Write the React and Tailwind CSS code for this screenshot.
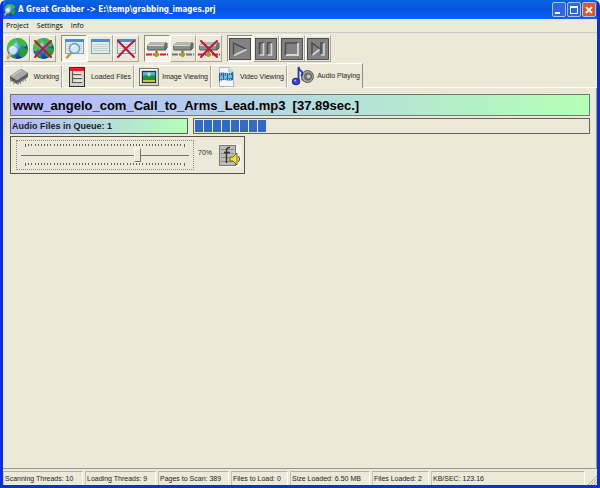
import { useId, useState } from "react";

function Cross() {
  return (
    <path d="M3 3 Q11 11 19 19 M19 3 Q11 10 3 19" fill="none" stroke="#c4123a" strokeWidth="2" strokeLinecap="round" />
  );
}

function Globe({ small, off }) {
  const id = useId();
  return (
    <svg viewBox="0 0 22 22" className={small ? "size-3" : "size-[22px]"} aria-hidden="true">
      <defs>
        <radialGradient id={id} cx="40%" cy="32%" r="70%">
          <stop offset="0" stopColor="#9bdcff" />
          <stop offset="0.45" stopColor="#2b7fe0" />
          <stop offset="1" stopColor="#0b2c86" />
        </radialGradient>
      </defs>
      <circle cx="11.500" cy="10.500" r="10.500" fill={`url(#${id})`} />
      <path d="M1 9 Q2 3 7 1 L11 2 L9 5 L7 7 L8 10 L4 13 L2 13Z" fill="#4cc442" />
      <path d="M12 0 Q19 1 21 7 L18 9 L16 7 L13 8 L11 5Z" fill="#3cbb3a" />
      <path d="M13 11 L19 10 L22 11 Q21 17 16 20 L13 17Z" fill="#2a9e35" />
      <path d="M4 14 L8 16 L10 20 Q5 19 3 16Z" fill="#2a9e35" />
      {off ? (
        <Cross />
      ) : (
        <>
          <path d="M4 16 L2 20" stroke="#d6ae6c" strokeWidth="3" strokeLinecap="round" />
          <circle cx="7" cy="12" r="4.500" fill="#d5effb" fillOpacity="0.9" stroke="#8fb0c4" />
          <path d="M4.500 11 Q5.500 9 8 9" stroke="#fff" fill="none" strokeWidth="1.500" />
        </>
      )}
    </svg>
  );
}

function ListWindow({ search, off }) {
  return (
    <svg viewBox="0 0 22 22" className="size-[22px]" aria-hidden="true">
      <rect x="2.500" y="1.500" width="18" height="14" fill="#e4ece6" stroke="#7fa2b4" />
      <rect x="2" y="1" width="19" height="3" fill="#4a8ecb" />
      <path d="M4 6.500H19 M4 8.500H19 M4 10.500H19 M4 12.500H19" stroke="#c3d0cd" />
      {search && (
        <>
          <path d="M8 15 L4 19.500" stroke="#c98d54" strokeWidth="2.500" strokeLinecap="round" />
          <circle cx="11.500" cy="10.500" r="5" fill="#c9e8f8" stroke="#7396b0" strokeWidth="1.300" />
          <path d="M8.500 10 Q9 7.500 12 7.500" stroke="#fff" fill="none" />
        </>
      )}
      {off && <Cross />}
    </svg>
  );
}

function Drive({ line, off }) {
  return (
    <svg viewBox="0 0 22 22" className="size-[22px]" aria-hidden="true">
      <path d="M5 4 H20 L21.500 5.500 V10 L19 12.500 H2 L1 11 V7.500Z" fill="#555553" />
      <path d="M5 4 H20 L18.500 7 H1.500Z" fill="#b4b4b2" />
      <path d="M1.500 7.500 H18 V11.500 H1.500Z" fill="#8d8d8b" />
      <path d="M18 7.500 L21 5 V9.500 L18 11.500Z" fill="#6f6f6d" />
      <path d="M1.500 7.500 H18" stroke="#d8d8d4" />
      <rect x="15" y="8.500" width="2" height="2" fill="#34d13d" />
      <path d="M10.500 12.500 V15" stroke="#66644c" strokeWidth="2" />
      <path d="M0 16.500 H22" stroke={line} strokeWidth="2" strokeDasharray="6 1" />
      <path d="M9 14.500 H12 L13 16.500 L11.500 19 H9.500 L8 16.500Z" fill="#b09a20" />
      {off && <Cross />}
    </svg>
  );
}

function Media({ kind }) {
  return (
    <svg viewBox="0 0 22 22" className="size-[22px]" aria-hidden="true">
      <rect x="0.5" y="0.5" width="21" height="21" fill="#828282" stroke="#4d4d4d" />
      {kind === "play" && (
        <g fill="none">
          <path d="M4.500 17 V5 L17 11" stroke="#4c4c4c" strokeWidth="1.400" />
          <path d="M17.500 11.500 L5 17.500" stroke="#d6d6d6" strokeWidth="1.800" />
        </g>
      )}
      {kind === "pause" && (
        <g fill="none">
          <path d="M4.500 17 V5 H9 M12.500 17 V5 H17" stroke="#4c4c4c" strokeWidth="1.500" />
          <path d="M4.500 17 H8.500 V5 M12.500 17 H16.500 V5" stroke="#d6d6d6" strokeWidth="1.600" />
        </g>
      )}
      {kind === "stop" && (
        <g fill="none">
          <path d="M4.500 17 V5 H17" stroke="#4c4c4c" strokeWidth="1.500" />
          <path d="M5 17 H17 V5" stroke="#d6d6d6" strokeWidth="1.800" />
        </g>
      )}
      {kind === "next" && (
        <g fill="none">
          <path d="M5 17 V5 L13 11 M14 16 V5 H17" stroke="#484848" strokeWidth="1.400" />
          <path d="M12.500 11.500 L5.500 17 M14 17 H17 V5" stroke="#d6d6d6" strokeWidth="1.600" />
        </g>
      )}
    </svg>
  );
}

function ChipIcon() {
  return (
    <svg viewBox="0 0 20 18" className="h-[18px] w-5" aria-hidden="true">
      <path d="M1 8 L12 1 L19 5 L19 9 L8 16 L1 12Z" fill="#5c5c5c" />
      <path d="M1 8 L12 1 L19 5 L8 12.500Z" fill="#a9a9a7" />
      <path d="M9 14 v3 M11.500 13 v3 M14 11 v3 M16.500 10 v3 M2 11 v3 M5 13 v3" stroke="#8a8a88" strokeWidth="1.200" />
      <path d="M3 8 L12 2.500" stroke="#d6d6d4" />
    </svg>
  );
}

function FilesIcon() {
  return (
    <svg viewBox="0 0 16 20" className="h-5 w-4" aria-hidden="true">
      <rect x="0.5" y="0.5" width="15" height="19" fill="#d3d0c5" stroke="#34302c" />
      <rect x="1" y="1" width="14" height="3" fill="#f01c1c" />
      <path d="M3.500 4 V15.500 M3 7.500 H12 M3 11.500 H13 M3 15.500 H13" stroke="#5d5850" fill="none" />
      <path d="M5 6 H12 M6 10 H13 M6 14 H13" stroke="#f4f3ee" />
    </svg>
  );
}

function ImageIcon() {
  return (
    <svg viewBox="0 0 20 18" className="h-[18px] w-5" aria-hidden="true">
      <rect x="0.5" y="0.5" width="19" height="17" fill="#d0d0c8" stroke="#77776f" />
      <path d="M1.500 16 V1.500 H18" stroke="#fff" fill="none" />
      <rect x="3.500" y="3.500" width="13" height="11" fill="#43b6f2" stroke="#333" />
      <path d="M4 12 V8 L7 7 L10 9 L13 7 L16 8 V12Z" fill="#1c8f30" />
      <path d="M4 12 H16 V14 H4Z" fill="#c8c93a" />
      <circle cx="10" cy="6" r="1.500" fill="#ffe843" />
    </svg>
  );
}

function VideoIcon() {
  return (
    <svg viewBox="0 0 16 20" className="h-5 w-4" aria-hidden="true">
      <path d="M1.500 0.500 H11 L15.500 5 V19.500 H1.500Z" fill="#f3f7fa" stroke="#a9bccb" />
      <path d="M11 0.500 V5 H15.500" fill="#d2e0ec" stroke="#a9bccb" />
      <path d="M1 6 Q4 5 8 6 T15 5 V13 Q11 14 8 13 T1 15Z" fill="#2a6290" />
      <path d="M2 8.500 L14 8 V11 L2 12.500Z" fill="#62c0ea" />
      <path d="M5.500 8 V12 M9.500 8 V12" stroke="#2a6290" />
      <path d="M2 7 H14 M2 13.500 L14 12.500" stroke="#dcebf5" strokeDasharray="1 1" />
    </svg>
  );
}

function AudioIcon() {
  return (
    <svg viewBox="0 0 22 20" className="h-5 w-[22px]" aria-hidden="true">
      <path d="M9 9 L15 5 V17 L9 14Z" fill="#b59a3a" />
      <circle cx="15.500" cy="10.500" r="6" fill="#a5a59f" stroke="#5a5a56" />
      <circle cx="16" cy="10.500" r="4" fill="#6a6a66" />
      <circle cx="16.500" cy="10.500" r="2" fill="#c4c4be" />
      <path d="M6.500 15 V1 Q7 4 10 6 Q11 8 9 10" stroke="#2a32b4" strokeWidth="1.800" fill="none" />
      <ellipse cx="4" cy="15.500" rx="3.800" ry="3.300" fill="#3a45cf" stroke="#1b1c85" />
      <circle cx="3" cy="14.500" r="1" fill="#a9b0ff" />
    </svg>
  );
}

function MixerIcon() {
  return (
    <svg viewBox="0 0 22 23" className="h-[23px] w-[22px]" aria-hidden="true">
      <rect width="22" height="23" fill="#f6f6f2" />
      <rect x="0.5" y="1.500" width="16" height="20" fill="#bcbcb8" stroke="#777" />
      <path d="M2 5.500 H15 M2 9.500 H15 M2 13.500 H15 M2 17.500 H15" stroke="#8b8b88" />
      <path d="M7.500 19 V6 Q8 3 11 3.500 M5 8.500 H11" stroke="#333" strokeWidth="1.500" fill="none" />
      <path d="M11 13 H14 L18 9 V21 L14 17 H11Z" fill="#efe02a" stroke="#6f650d" />
      <path d="M19.500 12 Q21.500 15 19.500 18" stroke="#333" fill="none" />
    </svg>
  );
}

const TOOL_GROUPS = [
  [
    ["Start grabbing", <Globe />],
    ["Stop grabbing", <Globe off />],
  ],
  [
    ["Scan pages", <ListWindow search />, true],
    ["Page list", <ListWindow />],
    ["Clear page list", <ListWindow off />],
  ],
  [
    ["Offline", <Drive line="#d3222f" />, true],
    ["Online", <Drive line="#77766a" />],
    ["Disconnect", <Drive line="#d3222f" off />],
  ],
  [
    ["Play", <Media kind="play" />, true],
    ["Pause", <Media kind="pause" />],
    ["Stop", <Media kind="stop" />],
    ["Next", <Media kind="next" />],
  ],
];

function ToolButton({ label, icon, pressed }) {
  const edge = pressed
    ? "border-t-[#8f8c7d] border-l-[#8f8c7d] border-r-white border-b-white bg-[#f5f3ea]"
    : "border-t-white border-l-white border-r-[#aaa798] border-b-[#aaa798]";
  return (
    <button type="button" aria-label={label} aria-pressed={!!pressed} className={`flex h-[27px] w-[26px] items-center justify-center border ${edge}`}>
      {icon}
    </button>
  );
}

const TABS = [
  ["Working", <ChipIcon />, "w-[58px] pl-1"],
  ["Loaded Files", <FilesIcon />, "w-[72px] pl-[6px]"],
  ["Image Viewing", <ImageIcon />, "w-[77px] pl-1"],
  ["Video Viewing", <VideoIcon />, "w-[76px] pl-[6px]"],
  ["Audio Playing", <AudioIcon />, "w-[76px] pl-1"],
];

function Tab({ label, icon, width, active }) {
  const look = active ? "h-[25px] border-r-[#8f8c7d]" : "h-[23px] border-b border-b-white border-r-[#aaa798]";
  return (
    <button
      type="button"
      role="tab"
      aria-selected={active}
      className={`flex shrink-0 items-center justify-between border-t border-r border-l border-t-white border-l-white pr-[2px] whitespace-nowrap ${width} ${look}`}
    >
      {icon}
      {label}
    </button>
  );
}

const STATUS = [
  ["Scanning Threads: 10", "w-[80px]"],
  ["Loading Threads: 9", "w-[71px]"],
  ["Pages to Scan: 389", "w-[71px]"],
  ["Files to Load: 0", "w-[57px]"],
  ["Size Loaded: 6.50 MB", "w-[80px]"],
  ["Files Loaded: 2", "w-[57px]"],
  ["KB/SEC: 123.16", "flex-1"],
];

const TICKS = Array.from({ length: 51 }, (_, i) => i);

function TickRow() {
  return (
    <div className="mx-1 flex justify-between" aria-hidden="true">
      {TICKS.map((i) => (
        <span key={i} className={`w-px bg-[#66645a] ${i === 0 || i === 50 ? "h-[3px]" : "h-[2px]"}`} />
      ))}
    </div>
  );
}

function Volume() {
  const [volume, setVolume] = useState(70);
  return (
    <section className="flex h-[38px] w-[235px] items-center border border-[#55534b] pl-[5px]">
      <div className="flex h-[30px] w-[178px] flex-col justify-between border border-dotted border-[#8c8a80] px-1 py-[3px]">
        <TickRow />
        <input
          type="range"
          aria-label="Volume"
          min="0"
          max="100"
          value={volume}
          onChange={(e) => setVolume(Number(e.target.value))}
          className="h-[14px] w-full appearance-none bg-transparent bg-[linear-gradient(#77756b,#77756b)] bg-[length:100%_1px] bg-center bg-no-repeat [&::-webkit-slider-thumb]:h-[14px] [&::-webkit-slider-thumb]:w-[7px] [&::-webkit-slider-thumb]:appearance-none [&::-webkit-slider-thumb]:border [&::-webkit-slider-thumb]:border-t-white [&::-webkit-slider-thumb]:border-r-[#77756b] [&::-webkit-slider-thumb]:border-b-[#77756b] [&::-webkit-slider-thumb]:border-l-white [&::-webkit-slider-thumb]:bg-[#ece9d8]"
        />
        <TickRow />
      </div>
      <output className="ml-1 w-[21px] pb-1">{volume}%</output>
      <button type="button" aria-label="Mixer">
        <MixerIcon />
      </button>
    </section>
  );
}

const CAPTION = "flex h-[15px] w-[14px] items-center justify-center rounded-xs border border-[#a9c4f5]";

export default function App() {
  return (
    <div className="flex min-h-screen flex-col overflow-hidden rounded-t-md border-x-3 border-b-3 border-[#0831d9] bg-[#ece9d8] font-['Liberation_Sans',sans-serif] text-[7px] leading-[10px] text-[#1c1c1c]">
      <header className="-mx-[3px] flex h-[19px] items-center bg-linear-to-b from-[#0a63e0] via-[#0653e2] to-[#0562fb] px-1">
        <Globe small />
        <h1 className="ml-[2px] flex-1 font-['DejaVu_Sans_Condensed','DejaVu_Sans',sans-serif] text-[8px] font-bold whitespace-nowrap text-white">
          A Great Grabber -&gt; E:\temp\grabbing_images.prj
        </h1>
        <div className="flex gap-px">
          <button type="button" aria-label="Minimize" className={`${CAPTION} bg-[#2d67e3]`}>
            <svg viewBox="0 0 10 10" className="size-[10px]"><path d="M1 8 H6" stroke="#fff" strokeWidth="2" /></svg>
          </button>
          <button type="button" aria-label="Maximize" className={`${CAPTION} bg-[#2d67e3]`}>
            <svg viewBox="0 0 10 10" className="size-[10px]"><path d="M1.500 2 V8.500 H8.500 V2" fill="none" stroke="#fff" /><path d="M1 2 H9" stroke="#fff" strokeWidth="2" /></svg>
          </button>
          <button type="button" aria-label="Close" className={`${CAPTION} bg-[#e0532b]`}>
            <svg viewBox="0 0 10 10" className="size-[10px]"><path d="M2 2 L8 8 M8 2 L2 8" stroke="#fff" strokeWidth="1.800" /></svg>
          </button>
        </div>
      </header>

      <nav className="flex h-[14px] items-center gap-2 border-b border-[#c8cac8] px-[3px] font-['Open_Sans',sans-serif] text-black">
        <button type="button">Project</button>
        <button type="button">Settings</button>
        <button type="button">Info</button>
      </nav>

      <div role="toolbar" aria-label="Tools" className="flex gap-[5px] px-px pt-[2px]">
        {TOOL_GROUPS.map((group) => (
          <div key={group[0][0]} className="flex">
            {group.map(([label, icon, pressed]) => (
              <ToolButton key={label} label={label} icon={icon} pressed={pressed} />
            ))}
          </div>
        ))}
      </div>

      <div role="tablist" className="flex h-[26px] items-end pl-px">
        {TABS.map(([label, icon, width], i) => (
          <Tab key={label} label={label} icon={icon} width={width} active={i === 4} />
        ))}
        <div className="flex-1 border-b border-white" />
      </div>

      <main className="flex flex-1 flex-col gap-[2px] border-r border-b border-[#99968a] pt-[6px] pr-[6px] pl-[7px]">
        <h2 className="h-[22px] border border-[#6d7b78] bg-linear-to-r from-[#b4b4ff] to-[#b4ffb4] pl-[2px] text-[13px] leading-[21px] font-bold whitespace-pre text-black">
          {"www_angelo_com_Call_to_Arms_Lead.mp3  [37.89sec.]"}
        </h2>
        <div className="flex gap-[5px]">
          <p className="h-4 w-[178px] border border-[#55605c] bg-linear-to-r from-[#b4b4ff] to-[#b4ffb4] pl-px text-[9px] leading-[15px] font-bold">
            Audio Files in Queue: 1
          </p>
          <div role="progressbar" aria-label="Playback" aria-valuenow="18" className="flex h-4 flex-1 gap-px border border-[#66645a] p-px">
            {TICKS.slice(0, 8).map((i) => (
              <span key={i} className="w-2 bg-[#316ac5]" />
            ))}
          </div>
        </div>
        <Volume />
      </main>

      <footer className="flex h-4 items-end gap-[2px]">
        {STATUS.map(([text, width]) => (
          <span key={text} className={`h-[14px] border-t border-r border-l border-t-[#b5b2a3] border-r-white border-l-[#c5c2b3] pl-px leading-[14px] whitespace-nowrap ${width}`}>
            {text}
          </span>
        ))}
        <svg viewBox="0 0 10 10" className="size-[10px]" aria-hidden="true">
          <path d="M1 10 L10 1 M4 10 L10 4 M7 10 L10 7" stroke="#b0ad9c" />
        </svg>
      </footer>
    </div>
  );
}
